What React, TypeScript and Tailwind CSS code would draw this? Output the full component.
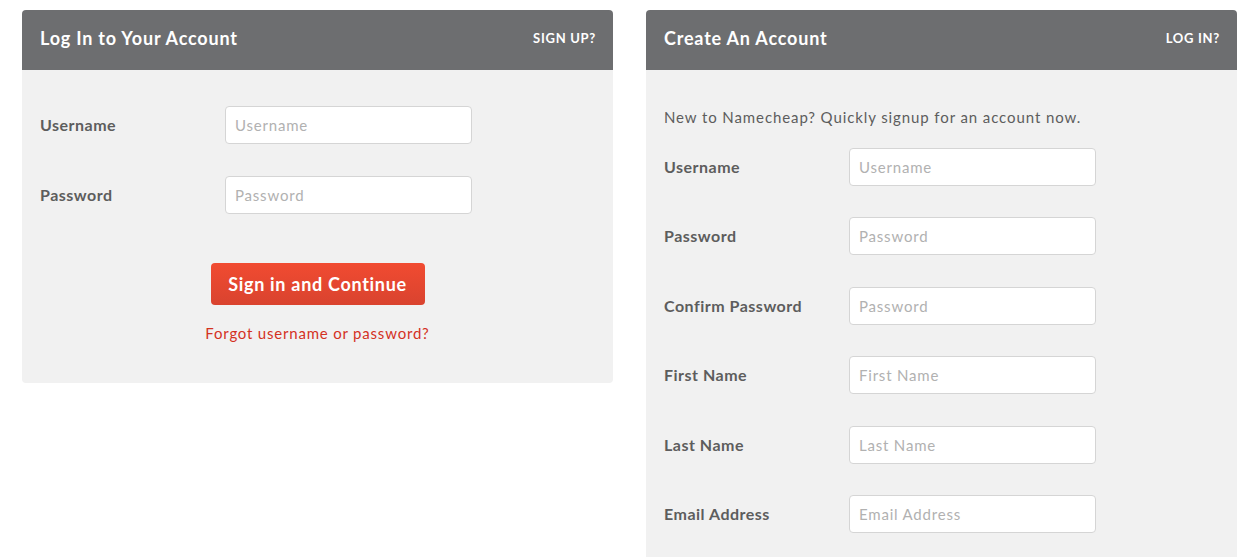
const font = { fontFamily: 'Lato, "Open Sans", "Liberation Sans", sans-serif' }

function Field({ label, placeholder, type = 'text' }: { label: string; placeholder: string; type?: string }) {
  return (
    <div className="flex items-center">
      <label className="w-[185px] shrink-0 text-[16px] font-bold text-[#5d5d5d] tracking-[0.5px]">{label}</label>
      <input
        type={type}
        placeholder={placeholder}
        className="w-[247px] h-[38px] rounded-[4px] border border-[#d5d5d5] bg-white px-[9px] text-[15px] tracking-[0.8px] text-[#444] placeholder:text-[#b1b1b1] outline-none"
      />
    </div>
  )
}

function CardHeader({ title, link }: { title: string; link: string }) {
  return (
    <div className="h-[60px] bg-[#6d6e70] rounded-t-[4px] flex items-center justify-between pl-[18px] pr-[17px]">
      <h2 className="text-white text-[18px] font-bold tracking-[0.8px] -mt-[3px]">{title}</h2>
      <a href="#" className="text-white text-[13px] font-bold tracking-[0.7px] -mt-[2px]">{link}</a>
    </div>
  )
}

export default function App() {
  return (
    <div style={font} className="w-[1251px] h-[557px] overflow-hidden bg-white flex gap-[33px] pl-[22px] pt-[10px]">
      {/* Log in */}
      <div className="w-[591px] self-start">
        <CardHeader title="Log In to Your Account" link="SIGN UP?" />
        <div className="bg-[#f1f1f1] rounded-b-[4px] h-[313px] pl-[18px] pt-[36px]">
          <div className="flex flex-col gap-[32px]">
            <Field label="Username" placeholder="Username" />
            <Field label="Password" placeholder="Password" type="password" />
          </div>
          <div className="flex flex-col items-center pr-[18px] mt-[49px]">
            <button className="w-[214px] h-[42px] rounded-[4px] bg-gradient-to-b from-[#f14b31] to-[#d9432f] text-white text-[18px] font-bold tracking-[0.7px]">
              Sign in and Continue
            </button>
            <a href="#" className="mt-[17px] text-[15px] text-[#d4321f] tracking-[0.8px]">Forgot username or password?</a>
          </div>
        </div>
      </div>

      {/* Create account */}
      <div className="w-[591px]">
        <CardHeader title="Create An Account" link="LOG IN?" />
        <div className="bg-[#f1f1f1] h-[500px] pl-[18px] pt-[36px]">
          <p className="text-[15px] text-[#5d5d5d] tracking-[0.9px]">New to Namecheap? Quickly signup for an account now.</p>
          <div className="flex flex-col gap-[31.6px] mt-[19px]">
            <Field label="Username" placeholder="Username" />
            <Field label="Password" placeholder="Password" type="password" />
            <Field label="Confirm Password" placeholder="Password" type="password" />
            <Field label="First Name" placeholder="First Name" />
            <Field label="Last Name" placeholder="Last Name" />
            <Field label="Email Address" placeholder="Email Address" />
          </div>
        </div>
      </div>
    </div>
  )
}
